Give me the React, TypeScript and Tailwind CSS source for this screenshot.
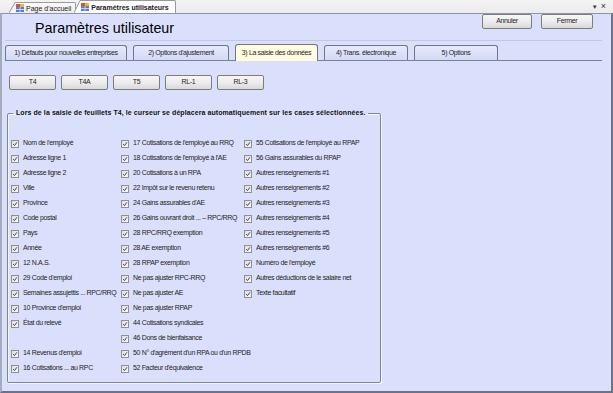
import React from 'react'

const col1: (string | null)[] = [
  "Nom de l'employé",
  'Adresse ligne 1',
  'Adresse ligne 2',
  'Ville',
  'Province',
  'Code postal',
  'Pays',
  'Année',
  '12 N.A.S.',
  "29 Code d'emploi",
  'Semaines assujettis ... RPC/RRQ',
  "10 Province d'emploi",
  'État du relevé',
  null,
  "14 Revenus d'emploi",
  '16 Cotisations ... au RPC',
]

const col2 = [
  "17 Cotisations de l'employé au RRQ",
  "18 Cotisations de l'employé à l'AE",
  '20 Cotisations à un RPA',
  '22 Impôt sur le revenu retenu',
  "24 Gains assurables d'AE",
  '26 Gains ouvrant droit ... – RPC/RRQ',
  '28 RPC/RRQ exemption',
  '28 AE exemption',
  '28 RPAP exemption',
  'Ne pas ajuster RPC-RRQ',
  'Ne pas ajuster AE',
  'Ne pas ajuster RPAP',
  '44 Cotisations syndicales',
  '46 Dons de bienfaisance',
  "50 N° d'agrément d'un RPA ou d'un RPDB",
  "52 Facteur d'équivalence",
]

const col3 = [
  "55 Cotisations de l'employé au RPAP",
  '56 Gains assurables du RPAP',
  'Autres renseignements #1',
  'Autres renseignements #2',
  'Autres renseignements #3',
  'Autres renseignements #4',
  'Autres renseignements #5',
  'Autres renseignements #6',
  "Numéro de l'employé",
  'Autres déductions de le salaire net',
  'Texte facultatif',
]

const tabs = [
  { label: '1) Défauts pour nouvelles entreprises', w: 'w-[122px]' },
  { label: "2) Options d'ajustement", w: 'w-[96px]' },
  { label: '3) La saisie des données', w: 'w-[83px]', active: true },
  { label: '4) Trans. électronique', w: 'w-[84px]' },
  { label: '5) Options', w: 'w-[84px]' },
]

function DocIcon() {
  return (
    <svg width="8" height="8" viewBox="0 0 8 8" className="shrink-0">
      <rect x="0" y="0" width="4" height="3" fill="#e0502c" />
      <rect x="4" y="0" width="4" height="3" fill="#f3b13a" />
      <rect x="0" y="3" width="8" height="5" fill="#4d7fd6" />
      <path d="M0 5.5h8M4 3v5" stroke="#dfe8fa" strokeWidth="0.8" />
    </svg>
  )
}

function DocTab({ label, active }: { label: string; active?: boolean }) {
  const h = active ? 13 : 11
  return (
    <div className={`flex items-end ${active ? '-ml-[2px] z-10' : ''}`}>
      <svg width="6" height={h} viewBox={`0 0 6 ${h}`} className="shrink-0">
        <polygon points={`0,${h} 6,0 6,${h}`} fill={active ? '#ffffff' : '#f6f6f6'} />
        <polyline points={`0,${h} 6,0.5`} fill="none" stroke="#9a9a9a" strokeWidth="1" />
      </svg>
      <div
        className={`flex items-center gap-[2px] border-t border-r border-[#9a9a9a] rounded-tr-[2px] pl-[1px] ${
          active ? 'h-[13px] bg-white pr-[6px] font-bold' : 'h-[11px] bg-gradient-to-b from-[#fbfbfb] to-[#ececec] pr-[4px]'
        }`}
      >
        <DocIcon />
        <span className="text-[7px] leading-none text-[#222] whitespace-nowrap">{label}</span>
      </div>
    </div>
  )
}

function Check() {
  return (
    <svg width="8" height="8" viewBox="0 0 8 8" className="shrink-0">
      <defs>
        <linearGradient id="cb" x1="0" y1="0" x2="1" y2="1">
          <stop offset="0" stopColor="#dcdcdc" />
          <stop offset="1" stopColor="#fbfbfb" />
        </linearGradient>
      </defs>
      <rect x="0.5" y="0.5" width="7" height="7" fill="url(#cb)" stroke="#8e9096" />
      <path d="M2.2 4.1l1.3 1.5 2.4-3.3" fill="none" stroke="#3d4a5c" strokeWidth="1" />
    </svg>
  )
}

function CheckItem({ label }: { label: string | null }) {
  return (
    <div className="h-[15px] flex items-center gap-[4px] whitespace-nowrap">
      {label && (
        <>
          <Check />
          <span className="text-[7px] tracking-[-0.35px] text-[#1e1e1e]">{label}</span>
        </>
      )}
    </div>
  )
}

function WinButton({ children, w }: { children: React.ReactNode; w: string }) {
  return (
    <div
      className={`${w} h-[15px] flex items-center justify-center rounded-[2px] border border-[#7c7c7c] bg-gradient-to-b from-[#f6f6f6] via-[#ececec] to-[#d9d9d9] text-[7px] tracking-[-0.35px] text-[#1e1e1e]`}
    >
      {children}
    </div>
  )
}

export default function App() {
  return (
    <div className="w-[613px] h-[393px] overflow-hidden flex flex-col bg-[#efefef] font-['Liberation_Sans',Arial,sans-serif]">
      {/* Document tabs */}
      <div className="h-[13px] flex items-end pl-[9px] bg-gradient-to-b from-[#f4f4f4] to-[#ebebeb]">
        <DocTab label="Page d'accueil" />
        <DocTab label="Paramètres utilisateurs" active />
        <div className="ml-auto mr-[7px] self-center flex items-center gap-[3px] text-[#333] leading-none">
          <span className="text-[6px]">▼</span>
          <span className="text-[9px]">×</span>
        </div>
      </div>

      {/* Form body */}
      <div className="flex-1 flex flex-col bg-[#dae0fc] border-t border-t-[#8c94a8] border-l-2 border-l-[#a3abbe] border-r-2 border-r-[#6b7385] border-b-2 border-b-[#6b7385]">
        <div className="h-[26px] flex justify-between">
          <div className="pl-[33px] pt-[7px] text-[14.3px] leading-[14.3px] text-black">Paramètres utilisateur</div>
          <div className="flex gap-[9px] pr-[18px]">
            <WinButton w="w-[50px]">Annuler</WinButton>
            <WinButton w="w-[52px]">Fermer</WinButton>
          </div>
        </div>
        <div className="h-px ml-[3px] mr-[9px] bg-[#c2c8e0]" />

        {/* Tab strip */}
        <div className="mt-[3px] ml-[3px] mr-[9px] flex items-end gap-[6px] border-b border-[#7a8295]">
          {tabs.map((t) =>
            t.active ? (
              <div
                key={t.label}
                className={`${t.w} h-[17px] -mb-px flex items-center justify-center rounded-t-[3px] border border-b-0 border-[#6f7789] bg-[#fffce1] text-[7px] tracking-[-0.35px] text-[#1e1e1e] whitespace-nowrap`}
              >
                {t.label}
              </div>
            ) : (
              <div
                key={t.label}
                className={`${t.w} h-[15px] flex items-center justify-center rounded-t-[3px] border border-b-0 border-[#6f7789] bg-gradient-to-b from-[#e6eafc] to-[#d3daf6] text-[7px] tracking-[-0.35px] text-[#1e1e1e] whitespace-nowrap`}
              >
                {t.label}
              </div>
            )
          )}
        </div>

        {/* Slip type buttons */}
        <div className="mt-[14px] ml-[7px] flex gap-[5px]">
          {['T4', 'T4A', 'T5', 'RL-1', 'RL-3'].map((b) => (
            <WinButton key={b} w="w-[47px]">
              {b}
            </WinButton>
          ))}
        </div>

        {/* Group box */}
        <fieldset className="mt-[19px] ml-[5px] w-[374px] border border-[#7f8696] rounded-[2px] shadow-[inset_1px_1px_0_#f4f6ff,1px_1px_0_#f4f6ff] pb-[6px]">
          <legend className="ml-[5px] px-[3px] h-[8px] text-[7px] leading-[8px] font-bold tracking-[0.08px] text-[#111]">
            Lors de la saisie de feuillets T4, le curseur se déplacera automatiquement sur les cases sélectionnées.
          </legend>
          <div className="pt-[19px] pl-[3px] flex">
            <div className="w-[110px] flex flex-col">
              {col1.map((l, i) => (
                <CheckItem key={i} label={l} />
              ))}
            </div>
            <div className="w-[123px] flex flex-col">
              {col2.map((l) => (
                <CheckItem key={l} label={l} />
              ))}
            </div>
            <div className="flex flex-col">
              {col3.map((l) => (
                <CheckItem key={l} label={l} />
              ))}
            </div>
          </div>
        </fieldset>
      </div>
    </div>
  )
}
